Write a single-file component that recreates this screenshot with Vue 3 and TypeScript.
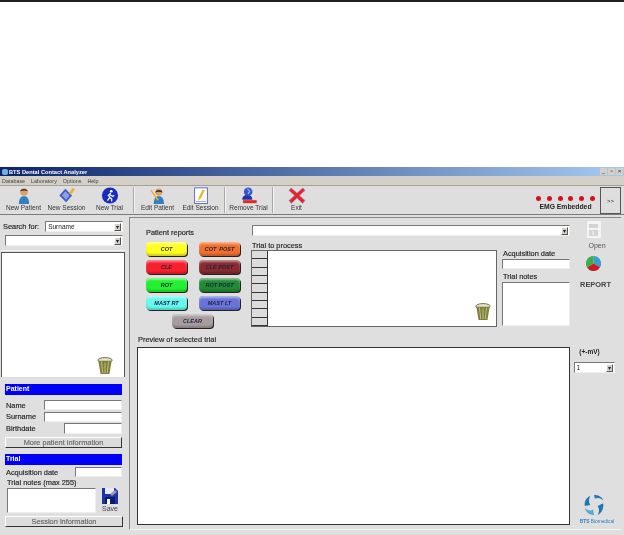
<script setup lang="ts">
const reportButtons = [
  { label: 'COT', bg: '#ffff22', cls: 'light' },
  { label: 'COT  POST', bg: '#f2702e', cls: '' },
  { label: 'CLE', bg: '#f8202c', cls: '' },
  { label: 'CLE POST', bg: '#8a2a2e', cls: '' },
  { label: 'ROT', bg: '#22f030', cls: '' },
  { label: 'ROT POST', bg: '#218a34', cls: '' },
  { label: 'MAST RT', bg: '#66f8ee', cls: 'light' },
  { label: 'MAST LT', bg: '#6a74d8', cls: '' },
]
const menus = ['Database', 'Laboratory', 'Options', 'Help']
const leds = [1, 2, 3, 4, 5, 6]
const gridRows = [1, 2, 3, 4, 5, 6, 7, 8, 9]
</script>

<template>
  <div class="page">
    <div class="top-rule"></div>
    <div class="window">
      <div class="titlebar">
        <span class="app-dot"></span>
        <span class="title">BTS Dental Contact Analyzer</span>
        <span class="win-btns"><i>_</i><i>▫</i><i>×</i></span>
      </div>
      <div class="menubar">
        <span v-for="m in menus" :key="m">{{ m }}</span>
      </div>

      <div class="toolbar">
        <div class="tool">
          <svg viewBox="0 0 20 20"><path d="M4 20c0-7 3-9 6-9s6 2 6 9z" fill="#2f7fc4"/><circle cx="10" cy="6" r="4.400" fill="#d9a06a"/><path d="M5.600 5c.6-3.400 7.600-4 8.800 0-2.600-1.200-6-1-8.800 0z" fill="#3b2a1c"/></svg>
          <span>New Patient</span>
        </div>
        <div class="tool">
          <svg viewBox="0 0 20 20"><path d="M1 10l7-8 8 8-7 8z" fill="#3f5cc0"/><path d="M4 10l4-5 5 5-4 5z" fill="#8aa0ea"/><path d="M12 7l5-6 2.500 2-5 6z" fill="#e6b432"/></svg>
          <span>New Session</span>
        </div>
        <div class="tool">
          <svg viewBox="0 0 20 20"><circle cx="10" cy="10" r="9.500" fill="#1a2cc0"/><circle cx="11.500" cy="5" r="1.600" fill="#fff"/><path d="M11 7l-3 3 2 2-3 4M10 9l3 2 2-1M9 12l3 2 0 3" stroke="#fff" stroke-width="1.400" fill="none"/></svg>
          <span>New Trial</span>
        </div>
        <div class="sep"></div>
        <div class="tool">
          <svg viewBox="0 0 20 20"><path d="M5 20c0-7 3-9 6-9s6 2 6 9z" fill="#2f7fc4"/><circle cx="11" cy="6" r="4.200" fill="#d9a06a"/><path d="M7 6.500c.4-3.600 7.400-4 8.200 0-2.600-1.200-5.600-1-8.200 0z" fill="#3b2a1c"/><path d="M2 3l9 12-1.600 1.200L1 4z" fill="#e8b030"/></svg>
          <span>Edit Patient</span>
        </div>
        <div class="tool">
          <svg viewBox="0 0 20 20"><rect x="2.500" y="1" width="15" height="18.500" fill="#fff" stroke="#4a5cc8"/><path d="M7 13l5-10 2.500 1-5 10-2.500 1.500z" fill="#f0b820"/><path d="M4 17h12" stroke="#8fa0e0"/></svg>
          <span>Edit Session</span>
        </div>
        <div class="sep"></div>
        <div class="tool">
          <svg viewBox="0 0 20 20"><path d="M2 15c0-4 3-6 6-6s6 2 6 6z" fill="#2233aa"/><circle cx="9" cy="5.500" r="5" fill="#3355cc"/><path d="M8 2l3 3-2 3" stroke="#fff" fill="none"/><rect x="3" y="15.500" width="16" height="3.500" fill="#e02a20"/></svg>
          <span>Remove Trial</span>
        </div>
        <div class="sep"></div>
        <div class="tool">
          <svg viewBox="0 0 20 20"><path d="M3 1l7 6 7-6 2.500 3-6.500 6 6.500 6-3 3.500-6.500-6.500-6.500 6.500-3-3.500 6.500-6-6.500-6z" fill="#e8222a" stroke="#9aa0c8" stroke-width=".8"/></svg>
          <span>Exit</span>
        </div>
        <div class="emg">
          <div class="leds"><i v-for="l in leds" :key="l"></i></div>
          <span>EMG Embedded</span>
        </div>
        <div class="more">&gt;&gt;</div>
      </div>

      <div class="body">
        <aside class="left">
          <div class="search-box">
            <div class="row">
              <label>Search for:</label>
              <div class="combo grow"><span>Surname</span><b>▾</b></div>
            </div>
            <div class="combo second-combo"><span></span><b>▾</b></div>
          </div>
          <div class="list">
            <svg class="basket" viewBox="0 0 18 20"><ellipse cx="9" cy="3.500" rx="8" ry="3" fill="#e0e0d4" stroke="#6a6a30"/><path d="M1.500 4l2.500 15h10l2.500-15z" fill="#7e8038"/><path d="M5 5l1.500 13M9 6v12M13 5l-1.500 13" stroke="#c8c890"/></svg>
          </div>
          <div class="band first">Patient</div>
          <div class="field"><label>Name</label><div class="input name"></div></div>
          <div class="field"><label>Surname</label><div class="input name"></div></div>
          <div class="field"><label>Birthdate</label><div class="input birth"></div></div>
          <div class="btn">More patient information</div>
          <div class="band second">Trial</div>
          <div class="field"><label>Acquisition date</label><div class="input acq"></div></div>
          <div class="notes-label">Trial notes (max 255)</div>
          <div class="notes-row">
            <div class="input notes"></div>
            <div class="save">
              <svg viewBox="0 0 16 16"><path d="M0 0h13l3 3v13H0z" fill="#1c34a8"/><rect x="3" y="0" width="9" height="6" fill="#e8e8f0"/><rect x="3" y="9" width="10" height="7" fill="#0c1a70"/><rect x="5" y="11" width="3" height="5" fill="#fff"/><path d="M8 6l5-4 2 2-5 4z" fill="#9a9aa8"/></svg>
              <span>Save</span>
            </div>
          </div>
          <div class="btn session">Session information</div>
        </aside>

        <section class="panel">
          <div class="main">
            <div class="upper">
              <div class="reports">
                <div class="reports-title">Patient reports</div>
                <div class="report-grid">
                  <div
                    v-for="b in reportButtons"
                    :key="b.label"
                    class="rbtn"
                    :class="b.cls"
                    :style="{ backgroundColor: b.bg }"
                  >{{ b.label }}</div>
                </div>
                <div class="rbtn clear">CLEAR</div>
              </div>
              <div class="process">
                <div class="combo wide-combo"><span></span><b>▾</b></div>
                <div class="process-row">
                  <div class="trial-col">
                    <div class="cap">Trial to process</div>
                    <div class="trial-grid">
                      <div class="row-heads"><i v-for="r in gridRows" :key="r"></i></div>
                      <svg class="basket" viewBox="0 0 18 20"><ellipse cx="9" cy="3.500" rx="8" ry="3" fill="#e0e0d4" stroke="#6a6a30"/><path d="M1.500 4l2.500 15h10l2.500-15z" fill="#7e8038"/><path d="M5 5l1.500 13M9 6v12M13 5l-1.500 13" stroke="#c8c890"/></svg>
                    </div>
                  </div>
                  <div class="acq-col">
                    <div class="cap">Acquisition date</div>
                    <div class="input acq-input"></div>
                    <div class="cap notes-cap">Trial notes</div>
                    <div class="input trial-notes"></div>
                  </div>
                </div>
              </div>
            </div>
            <div class="cap preview-cap">Preview of selected trial</div>
            <div class="preview"></div>
          </div>

          <div class="side">
            <svg class="doc" viewBox="0 0 16 17"><rect x="1" y="0" width="14" height="17" fill="#f4f4f4"/><path d="M3 3h9v4H3zM3 9h9v6H3z" fill="#d4d4d4"/><path d="M7 10v4" stroke="#f4f4f4"/></svg>
            <span class="open">Open</span>
            <svg class="pie" viewBox="0 0 16 16"><path d="M8 8V0a8 8 0 0 1 7 12z" fill="#3a9fd0"/><path d="M8 8L15 12a8 8 0 0 1-14 0z" fill="#c81e22"/><path d="M8 8L1 12A8 8 0 0 1 8 0z" fill="#3cae4a"/></svg>
            <span class="report">REPORT</span>
            <span class="mv">(+-mV)</span>
            <div class="combo mv-combo"><span>1</span><b>▾</b></div>
            <div class="logo">
              <svg viewBox="0 0 24 24"><path d="M12 1c5 0 9 2 10 6-3-3-6-3-9-2z" fill="#1f78b4"/><path d="M22 10c1 6-2 11-6 13 2-4 2-7 0-10z" fill="#1f78b4"/><path d="M12 23C7 23 3 20 2 15c3 3 6 4 9 2z" fill="#5ba8d8"/><path d="M2 13C1 8 4 4 8 2 6 6 6 9 8 12z" fill="#1f78b4"/></svg>
              <span><b>BTS</b> Biomedical</span>
            </div>
          </div>
        </section>
      </div>
    </div>
  </div>
</template>

<style>
html, body { margin: 0; background: #fff; }
</style>

<style scoped>
.page {
  width: 624px;
  height: 535px;
  overflow: hidden;
  background: #fff;
  font-family: "Liberation Sans", Arial, sans-serif;
  font-size: 7.400px;
  color: #222;
}
.top-rule { height: 2px; background: #231f20; }
.window {
  margin-top: 165px;
  height: 368px;
  background: #dfdfdf;
  display: flex;
  flex-direction: column;
  filter: blur(.3px);
}
.titlebar {
  height: 9px;
  flex: none;
  display: flex;
  align-items: center;
  padding: 0 1px 0 2px;
  background: linear-gradient(90deg, #0a246a, #a6caf0);
  color: #fff;
  font-size: 5.700px;
  font-weight: bold;
}
.app-dot { width: 6px; height: 6px; background: #6fb0e0; border-radius: 2px; margin-right: 1px; }
.win-btns { margin-left: auto; display: flex; gap: 1px; }
.win-btns i { width: 7px; height: 7px; background: #d4d0c8; color: #222; font: 6px/7px "Liberation Sans", sans-serif; text-align: center; }
.menubar {
  height: 9px;
  flex: none;
  display: flex;
  gap: 6px;
  padding: 0 2px;
  align-items: center;
  background: #d4d0c8;
  border-bottom: 1px solid #a4a29c;
  font-size: 5.400px;
  color: #444;
}
.toolbar {
  height: 28px;
  flex: none;
  display: flex;
  align-items: stretch;
  background: #dedede;
  border-bottom: 1px solid #7c7c7c;
  padding-left: 2px;
}
.tool {
  width: 43px;
  display: flex;
  flex-direction: column;
  align-items: center;
  padding-top: 1px;
  color: #333;
  font-size: 6.500px;
  line-height: 7px;
  white-space: nowrap;
}
.tool svg { width: 18px; height: 17px; margin-bottom: 0; }
.sep { width: 1px; margin: 1px 1px 1px 2px; background: #a8a8a8; border-right: 1px solid #f4f4f4; }
.emg {
  margin-left: auto;
  margin-right: 5px;
  display: flex;
  flex-direction: column;
  align-items: center;
  padding-top: 10px;
  font-size: 6.800px;
  font-weight: bold;
}
.leds { display: flex; gap: 5.800px; margin-bottom: 2px; }
.leds i { width: 5px; height: 5px; border-radius: 50%; background: #d8101c; }
.more {
  width: 21px;
  height: 27px;
  margin: 1px 3px 0 0;
  border: 1px solid #555;
  box-sizing: border-box;
  display: flex;
  align-items: center;
  justify-content: center;
  font-size: 6px;
}
.body { flex: 1; display: flex; min-height: 0; }
.left { width: 125px; padding-top: 2px; display: flex; flex-direction: column; flex: none; }
.left > * { flex: none; }
.search-box {
  height: 34px;
  box-sizing: border-box;
  padding: 4px 2px 0 3px;
  border-bottom: 1px solid #f4f4f4;
  display: flex;
  flex-direction: column;
  gap: 3px;
}
.row { display: flex; align-items: center; gap: 6px; }
.row label { white-space: nowrap; -webkit-text-stroke: .15px #222; }
.combo {
  height: 11px;
  flex: none;
  box-sizing: border-box;
  border: 1px solid;
  border-color: #777 #eee #eee #777;
  background: #fff;
  display: flex;
  justify-content: space-between;
  align-items: center;
  font-size: 6.500px;
  padding-left: 2px;
}
.combo b {
  width: 7px;
  height: 8px;
  background: #d4d0c8;
  border: 1px solid;
  border-color: #fff #555 #555 #fff;
  box-sizing: border-box;
  font: 6px/6px "Liberation Sans", sans-serif;
  text-align: center;
  margin-right: 1px;
}
.grow { flex: 1; }
.second-combo { margin-left: 2px; }
.list {
  height: 125px;
  margin: 1px 0 0 1px;
  box-sizing: border-box;
  border: 1px solid #555;
  border-bottom: none;
  background: #fff;
  display: flex;
  justify-content: flex-end;
  align-items: flex-end;
  padding: 0 11px 2px 0;
}
.basket { width: 16px; height: 18px; }
.band {
  margin-left: 5px;
  width: 117px;
  height: 11px;
  padding-left: 1px;
  box-sizing: border-box;
  background: #0000f8;
  color: #fff;
  font-size: 7px;
  font-weight: bold;
  line-height: 9px;
}
.band.first { margin-top: 7px; margin-bottom: 4.500px; }
.band.second { margin-top: 6px; margin-bottom: 2px; }
.field {
  height: 11.500px;
  margin-left: 6px;
  width: 116px;
  display: flex;
  justify-content: space-between;
  align-items: center;
  -webkit-text-stroke: .15px #222;
}
.input {
  box-sizing: border-box;
  background: #fff;
  border: 1px solid;
  border-color: #777 #eee #eee #777;
}
.input.name { width: 78px; height: 10px; }
.input.birth { width: 58px; height: 11px; }
.input.acq { width: 47px; height: 10px; }
.btn {
  margin: 2.500px 0 0 5px;
  width: 117px;
  height: 11px;
  box-sizing: border-box;
  background: #dcdcdc;
  border: 1px solid;
  border-color: #fff #333 #333 #fff;
  color: #666;
  -webkit-text-stroke: .15px #666;
  text-align: center;
  line-height: 9px;
}
.notes-label { margin: 1px 0 0 7px; height: 9px; line-height: 8px; -webkit-text-stroke: .15px #222; }
.notes-row { display: flex; margin-left: 7px; gap: 5px; }
.input.notes { width: 89px; height: 25px; }
.save { width: 18px; display: flex; flex-direction: column; align-items: center; font-size: 7px; color: #444; }
.save svg { width: 16px; height: 16px; margin-bottom: 1px; }
.btn.session { width: 118px; margin-top: 3px; }

.panel {
  margin: 2px 3px 5px 4px;
  flex: 1;
  display: flex;
  border: 1px solid #888;
  border-right: none;
  border-bottom-color: #f4f4f4;
  box-sizing: border-box;
  padding: 6px 0 0 7px;
  min-width: 0;
}
.main { width: 433px; flex: none; display: flex; flex-direction: column; }
.main > * { flex: none; }
.upper { display: flex; height: 112px; }
.reports { width: 114px; flex: none; }
.reports-title { margin: 4px 0 0 9px; height: 14px; -webkit-text-stroke: .15px #222; }
.report-grid {
  display: grid;
  grid-template-columns: 41px 41px;
  column-gap: 12px;
  row-gap: 4px;
  margin-left: 9px;
}
.rbtn {
  height: 14px;
  border-radius: 4px;
  box-shadow: 1px 1px 0 #222, inset 0 2px 2px rgba(255,255,255,.45), inset 0 -2px 2px rgba(0,0,0,.2);
  font-size: 5.500px;
  font-style: italic;
  font-weight: bold;
  color: #1b2340;
  text-align: center;
  line-height: 14px;
  white-space: pre;
}
.clear { width: 41px; margin: 4px 0 0 35px; background: #a89ca0; }
.process { flex: 1; display: flex; flex-direction: column; padding-left: 1px; }
.wide-combo { width: 318px; height: 11px; margin-top: 1px; }
.process-row { display: flex; margin-top: 6px; }
.trial-col { width: 246px; margin-left: -1px; }
.cap { height: 9px; line-height: 8px; white-space: nowrap; -webkit-text-stroke: .15px #222; }
.trial-col .cap { padding-left: 1px; }
.trial-grid {
  height: 77px;
  margin-top: -1px;
  box-sizing: border-box;
  border: 1px solid #666;
  background: #fff;
  display: flex;
  justify-content: space-between;
  align-items: flex-end;
  padding-right: 5px;
}
.row-heads { width: 15px; height: 100%; display: flex; flex-direction: column; background: #dcdcdc; border-right: 1px solid #333; }
.row-heads i { flex: 1; border-bottom: 1px solid #333; }
.trial-grid .basket { margin-bottom: 5px; }
.acq-col { width: 68px; margin-left: 5px; padding-top: 8px; }
.acq-col .cap { padding-left: 1px; }
.acq-input { width: 68px; height: 10px; }
.notes-cap { margin-top: 4px; }
.trial-notes { width: 68px; height: 44px; }
.preview-cap { padding-left: 1px; }
.preview {
  height: 178px;
  margin-top: 2px;
  background: #fff;
  border: 1px solid #333;
  box-sizing: border-box;
}
.side {
  flex: 1;
  display: flex;
  flex-direction: column;
  align-items: center;
  font-size: 7px;
  margin-top: -3px;
}
.doc { width: 16px; height: 17px; margin-right: 4px; }
.open { margin-top: 4px; color: #555; margin-left: 3px; }
.pie { width: 15px; height: 15px; margin-top: 7px; margin-right: 4px; }
.report { margin-top: 9px; font-weight: bold; font-size: 7.400px; color: #444; }
.mv { margin-top: 59px; font-weight: bold; margin-right: 12px; font-size: 6.500px; }
.mv-combo { width: 41px; margin-top: 7px; margin-right: 3px; }
.logo { margin-top: 121px; display: flex; flex-direction: column; align-items: center; margin-right: 3px; }
.logo svg { width: 22px; height: 22px; }
.logo span { font-size: 4.800px; color: #2c7fc0; margin: 3px 0 0 6px; white-space: nowrap; }
</style>
